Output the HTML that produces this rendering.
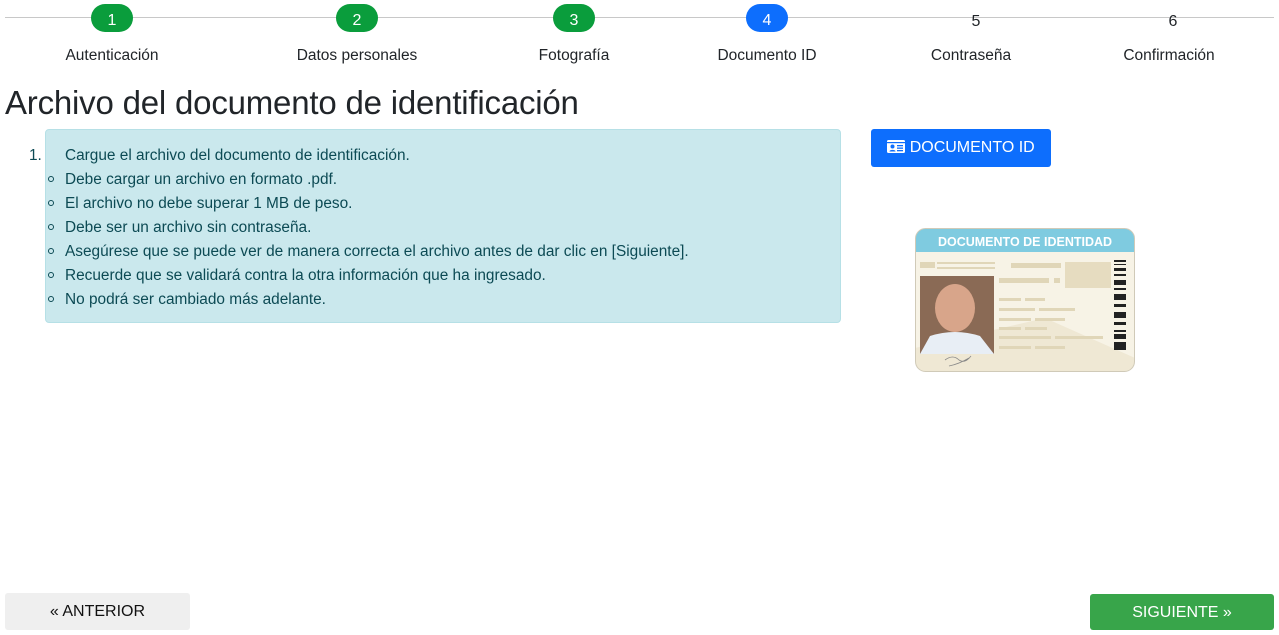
<!DOCTYPE html>
<html><head><meta charset="utf-8"><style>
body{margin:0;width:1279px;height:635px;position:relative;font-family:"Liberation Sans",Arial,sans-serif;color:#212529;background:#fff;overflow:hidden}
.line{position:absolute;left:5px;right:5px;top:17px;height:1px;background:#c8c8c8}
.c{position:absolute;top:4px;width:42px;height:28px;margin-left:-21px;border-radius:14px;color:#fff;text-align:center;line-height:34px;font-size:16px}
.g{background:#0a9d3c}.b{background:#0d6efd}.n{color:#212529;background:transparent}
.l{position:absolute;top:47px;font-size:15.5px;transform:translateX(-50%);white-space:nowrap}
h1{position:absolute;left:5px;top:84px;margin:0;font-size:33px;font-weight:500;letter-spacing:-0.2px}
.al{position:absolute;left:45px;top:129px;width:794px;height:192px;background:#cae8ed;border:1px solid #b6e0e6;border-radius:4px}
.t{position:absolute;left:65px;font-size:15.4px;color:#0c4a54;white-space:nowrap}
.bul{position:absolute;left:48px;width:4px;height:4px;border:1px solid #0c4a54;border-radius:50%}
.btn{position:absolute;font-size:16px;text-align:center;border-radius:3px}
</style></head><body>
<div class="line"></div>
<div class="c g" style="left:112px">1</div>
<div class="c g" style="left:357px">2</div>
<div class="c g" style="left:574px">3</div>
<div class="c b" style="left:767px">4</div>
<div class="c n" style="left:976px;top:5px">5</div>
<div class="c n" style="left:1173px;top:5px">6</div>
<div class="l" style="left:112px">Autenticación</div>
<div class="l" style="left:357px">Datos personales</div>
<div class="l" style="left:574px">Fotografía</div>
<div class="l" style="left:767px">Documento ID</div>
<div class="l" style="left:971px">Contraseña</div>
<div class="l" style="left:1169px">Confirmación</div>
<h1>Archivo del documento de identificación</h1>
<div class="al"></div>
<div class="t" style="left:29px;top:147px">1.</div>
<div class="t" style="top:147px">Cargue el archivo del documento de identificación.</div>
<div class="t" style="top:171px">Debe cargar un archivo en formato .pdf.</div>
<div class="t" style="top:195px">El archivo no debe superar 1 MB de peso.</div>
<div class="t" style="top:219px">Debe ser un archivo sin contraseña.</div>
<div class="t" style="top:243px">Asegúrese que se puede ver de manera correcta el archivo antes de dar clic en [Siguiente].</div>
<div class="t" style="top:267px">Recuerde que se validará contra la otra información que ha ingresado.</div>
<div class="t" style="top:291px">No podrá ser cambiado más adelante.</div>
<div class="bul" style="top:176px"></div><div class="bul" style="top:200px"></div><div class="bul" style="top:224px"></div><div class="bul" style="top:248px"></div><div class="bul" style="top:272px"></div><div class="bul" style="top:296px"></div>
<div class="btn" style="left:871px;top:129px;width:180px;height:38px;background:#0d6efd;color:#fff;line-height:38px"><svg width="18" height="13" viewBox="0 0 18 13" style="vertical-align:-1px"><rect width="18" height="13" rx="1.5" fill="#fff"/><rect x="0" y="2" width="18" height="1.2" fill="#0d6efd"/><circle cx="5.5" cy="6.5" r="2" fill="#0d6efd"/><path d="M2.5 11.5c0-2.2 6-2.2 6 0z" fill="#0d6efd"/><rect x="10" y="5" width="6" height="1.3" fill="#0d6efd"/><rect x="10" y="7.5" width="6" height="1.3" fill="#0d6efd"/><rect x="10" y="10" width="6" height="1.3" fill="#0d6efd"/></svg> DOCUMENTO ID</div>
<svg style="position:absolute;left:915px;top:228px" width="220" height="144" viewBox="0 0 220 144">
<defs><clipPath id="cp"><rect x="0.5" y="0.5" width="219" height="143" rx="10"/></clipPath></defs>
<g clip-path="url(#cp)">
<rect width="220" height="144" fill="#f7f3e6"/>
<path d="M0 120 L130 90 L220 130 L220 144 L0 144z" fill="#efe8d4"/>
<rect width="220" height="24" fill="#7fcbe0"/>
<text x="110" y="18" text-anchor="middle" font-family="Liberation Sans" font-weight="bold" font-size="12.5" fill="#fff">DOCUMENTO DE IDENTIDAD</text>
<rect x="5" y="34" width="15" height="6" fill="#e0d6b8"/><rect x="22" y="34" width="58" height="2" fill="#e0d6b8"/><rect x="22" y="39" width="58" height="2" fill="#e0d6b8"/>
<rect x="96" y="35" width="50" height="5" fill="#e0d6b8"/><rect x="84" y="50" width="50" height="5" fill="#e0d6b8"/><rect x="139" y="50" width="6" height="5" fill="#e0d6b8"/>
<rect x="150" y="34" width="46" height="26" fill="#e6dcc0"/>
<g fill="#222"><rect x="199" y="32" width="12" height="2"/><rect x="199" y="36" width="12" height="1"/><rect x="199" y="40" width="12" height="3"/><rect x="199" y="46" width="12" height="2"/><rect x="199" y="52" width="12" height="5"/><rect x="199" y="60" width="12" height="2"/><rect x="199" y="66" width="12" height="6"/><rect x="199" y="76" width="12" height="3"/><rect x="199" y="84" width="12" height="6"/><rect x="199" y="94" width="12" height="3"/><rect x="199" y="102" width="12" height="2"/><rect x="199" y="106" width="12" height="5"/><rect x="199" y="114" width="12" height="8"/></g>
<rect x="5" y="48" width="74" height="78" fill="#8a6a55"/>
<ellipse cx="40" cy="80" rx="20" ry="24" fill="#d8a58a"/>
<path d="M5 126 L15 108 Q40 100 65 108 L79 126z" fill="#e8eef5"/>
<rect x="84" y="70" width="22" height="3" fill="#e0d6b8"/><rect x="110" y="70" width="20" height="3" fill="#e0d6b8"/>
<rect x="84" y="80" width="36" height="3" fill="#e0d6b8"/><rect x="124" y="80" width="36" height="3" fill="#e0d6b8"/>
<rect x="84" y="90" width="32" height="3" fill="#e0d6b8"/><rect x="120" y="90" width="30" height="3" fill="#e0d6b8"/>
<rect x="84" y="99" width="22" height="3" fill="#e0d6b8"/><rect x="110" y="99" width="22" height="3" fill="#e0d6b8"/>
<rect x="84" y="108" width="52" height="3" fill="#e0d6b8"/><rect x="140" y="108" width="48" height="3" fill="#e0d6b8"/>
<rect x="84" y="118" width="32" height="3" fill="#e0d6b8"/><rect x="120" y="118" width="30" height="3" fill="#e0d6b8"/>
<path d="M30 132 q8 -6 14 0 q6 4 12 -4 M34 138 q10 -2 20 -8" stroke="#888" fill="none" stroke-width="0.8"/>
</g>
<rect x="0.5" y="0.5" width="219" height="143" rx="10" fill="none" stroke="#d0cab8"/>
</svg>
<div class="btn" style="left:5px;top:593px;width:185px;height:37px;background:#efefef;line-height:38px;color:#111">« ANTERIOR</div>
<div class="btn" style="left:1090px;top:594px;width:184px;height:36px;background:#38a54a;line-height:37px;color:#fff">SIGUIENTE »</div>
</body></html>
